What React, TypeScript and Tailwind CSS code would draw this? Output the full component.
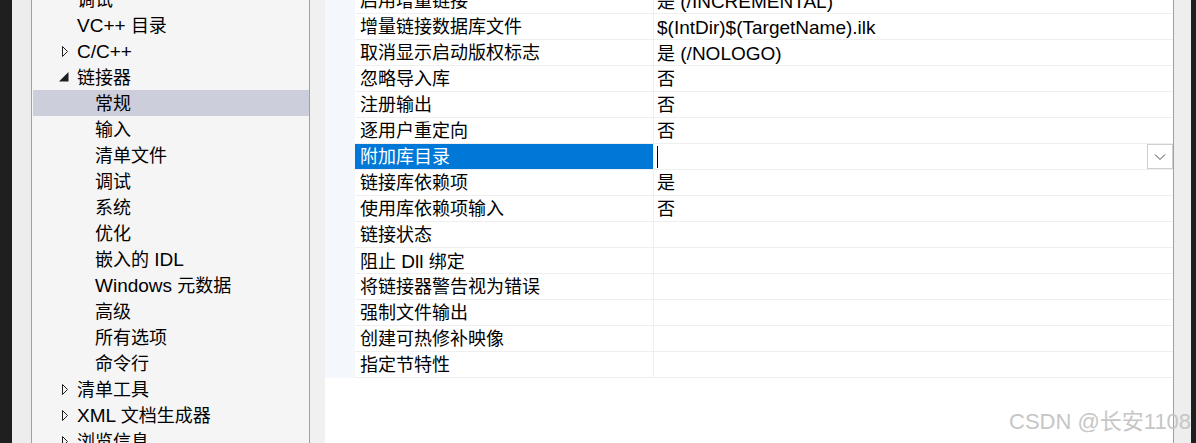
import React from "react";

const FONT = "font-['Liberation_Sans','Noto_Sans_CJK_SC',sans-serif]";

function T({ s }: { s: string }) {
  const parts = s.split(/([\u3400-\u9fff\u3000-\u303f\uff00-\uffef]+)/);
  return (
    <>
      {parts.map((p, i) =>
        p === "" ? null : /[\u3400-\u9fff\u3000-\u303f\uff00-\uffef]/.test(p) ? (
          <span key={i}>{p}</span>
        ) : (
          <span key={i} className="text-[19px] whitespace-pre">
            {p}
          </span>
        )
      )}
    </>
  );
}

type TreeItem = { label: string; level: 1 | 2; icon?: "closed" | "open"; selected?: boolean };

const tree: TreeItem[] = [
  { label: "调试", level: 1 },
  { label: "VC++ 目录", level: 1 },
  { label: "C/C++", level: 1, icon: "closed" },
  { label: "链接器", level: 1, icon: "open" },
  { label: "常规", level: 2, selected: true },
  { label: "输入", level: 2 },
  { label: "清单文件", level: 2 },
  { label: "调试", level: 2 },
  { label: "系统", level: 2 },
  { label: "优化", level: 2 },
  { label: "嵌入的 IDL", level: 2 },
  { label: "Windows 元数据", level: 2 },
  { label: "高级", level: 2 },
  { label: "所有选项", level: 2 },
  { label: "命令行", level: 2 },
  { label: "清单工具", level: 1, icon: "closed" },
  { label: "XML 文档生成器", level: 1, icon: "closed" },
  { label: "浏览信息", level: 1, icon: "closed" },
];

const rows: { name: string; value: string; selected?: boolean }[] = [
  { name: "启用增量链接", value: "是 (/INCREMENTAL)" },
  { name: "增量链接数据库文件", value: "$(IntDir)$(TargetName).ilk" },
  { name: "取消显示启动版权标志", value: "是 (/NOLOGO)" },
  { name: "忽略导入库", value: "否" },
  { name: "注册输出", value: "否" },
  { name: "逐用户重定向", value: "否" },
  { name: "附加库目录", value: "", selected: true },
  { name: "链接库依赖项", value: "是" },
  { name: "使用库依赖项输入", value: "否" },
  { name: "链接状态", value: "" },
  { name: "阻止 Dll 绑定", value: "" },
  { name: "将链接器警告视为错误", value: "" },
  { name: "强制文件输出", value: "" },
  { name: "创建可热修补映像", value: "" },
  { name: "指定节特性", value: "" },
];

function TreeIcon({ kind }: { kind?: "closed" | "open" }) {
  return (
    <span className="inline-block align-top w-[18px] h-[26px]">
      {kind && (
        <svg width="18" height="26" viewBox="0 0 18 26" className="block">
          {kind === "closed" ? (
            <polygon points="3.5,8.5 3.5,18.5 8.5,13.5" fill="none" stroke="#1e1e1e" strokeWidth="1" />
          ) : (
            <polygon points="9.5,8 9.5,17.5 0,17.5" fill="#1e1e1e" />
          )}
        </svg>
      )}
    </span>
  );
}

export default function App() {
  return (
    <div className={`relative w-[1196px] h-[443px] overflow-hidden flex bg-white text-[18px] text-black ${FONT}`}>
      {/* left dark strip */}
      <div className="w-[12px] shrink-0 bg-[#1f1f1f]" />
      <div className="w-[20px] shrink-0 bg-[#ededed] border-r border-[#a0a0a0]" />

      {/* tree */}
      <div className="w-[278px] shrink-0 bg-[#f5f5f5] border-r border-[#a0a0a0] pl-[1px] overflow-hidden">
        <div className="-mt-[14px] flex flex-col">
          {tree.map((t, i) => (
            <div
              key={i}
              className={`h-[26px] whitespace-nowrap leading-[28px] ${t.selected ? "bg-[#cccedb]" : ""} ${
                t.level === 1 ? "pl-[26px]" : "pl-[62px]"
              }`}
            >
              {t.level === 1 && <TreeIcon kind={t.icon} />}
              <T s={t.label} />
            </div>
          ))}
        </div>
      </div>

      <div className="w-[15px] shrink-0 bg-[#f0f0f0]" />

      {/* property grid */}
      <div className="w-[848px] shrink-0 bg-white overflow-hidden">
        <div className="-mt-[12px] flex flex-col">
          {rows.map((r, i) => (
            <div key={i} className="h-[26px] flex whitespace-nowrap">
              <div className="w-[30px] shrink-0 bg-[#f4f7fc]" />
              <div className="w-[298px] shrink-0 border-b border-[#efefef]">
                <div
                  className={`h-[25px] pl-[5px] leading-[27px] ${r.selected ? "bg-[#0078d7] text-white" : ""}`}
                >
                  <T s={r.name} />
                </div>
              </div>
              <div className="flex-1 border-l border-b border-[#efefef]">
                {r.selected ? (
                  <div className="h-[25px] flex items-center">
                    <div className="ml-[3px] w-px h-[22px] bg-black" />
                    <div className="ml-auto w-[26px] h-[25px] border border-[#cfcfcf] bg-white flex items-center justify-center">
                      <svg width="12" height="8" viewBox="0 0 12 8">
                        <polyline points="1,1.5 6,6.5 11,1.5" fill="none" stroke="#4a4a4a" strokeWidth="1" />
                      </svg>
                    </div>
                  </div>
                ) : (
                  <div className="h-[25px] pl-[3px] leading-[27px]">
                    <T s={r.value} />
                  </div>
                )}
              </div>
            </div>
          ))}
        </div>
      </div>

      {/* right edge */}
      <div className="w-[18px] shrink-0 bg-[#eeeeee] border-l border-[#a0a0a0]" />
      <div className="relative z-10 w-[5px] shrink-0 bg-[#1f1f1f]" />

      {/* watermark */}
      <div className="absolute left-[1009px] top-[411px] text-[22px] leading-[22px] text-[#c6c6c6] whitespace-nowrap">
        CSDN @长安1108
      </div>
    </div>
  );
}
